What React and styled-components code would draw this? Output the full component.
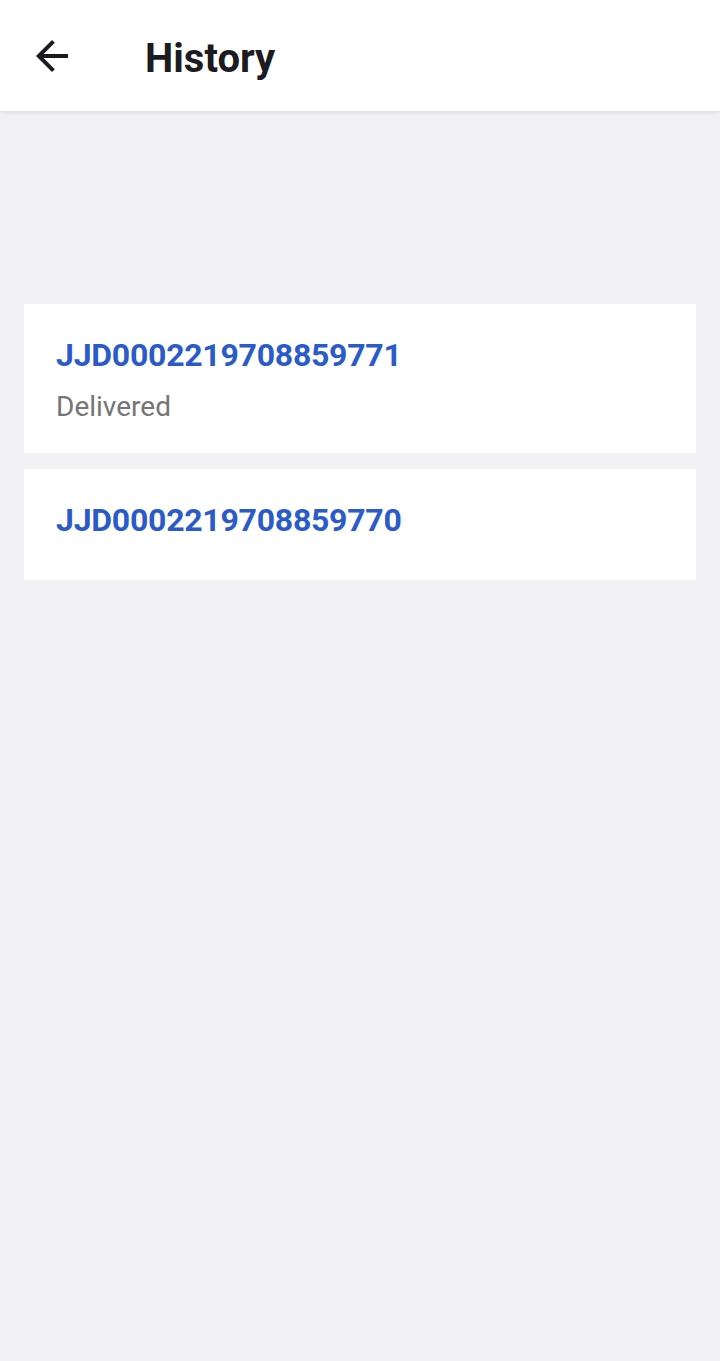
import React from "react";
import styled, { createGlobalStyle } from "styled-components";

const Global = createGlobalStyle`
  html, body { margin: 0; padding: 0; background: #f2f1f4; }
  body { font-family: Roboto, "Noto Sans", sans-serif; }
  * { box-sizing: border-box; }
`;

const Page = styled.div`
  min-height: 1361px;
  background: #f2f1f4;
  display: flex;
  flex-direction: column;
`;

const TopBar = styled.header`
  height: 111px;
  background: #ffffff;
  display: flex;
  align-items: center;
  padding-left: 28px;
  box-shadow: 0 1px 4px rgba(0, 0, 0, 0.12);
  position: relative;
  z-index: 1;
`;

const BackButton = styled.button`
  width: 48px;
  height: 48px;
  padding: 0;
  border: none;
  background: transparent;
  display: flex;
  align-items: center;
  justify-content: center;
  color: #1c1b1f;
  cursor: pointer;
`;

const Title = styled.h1`
  margin: 6px 0 0 69px;
  font-size: 40px;
  font-weight: 700;
  color: #1c1b1f;
  line-height: 48px;
`;

const List = styled.main`
  display: flex;
  flex-direction: column;
  gap: 16px;
  padding: 193px 24px 0;
`;

const Card = styled.div`
  background: #ffffff;
  min-height: 111px;
  padding: 31px 32px 28px;
  display: flex;
  flex-direction: column;
`;

const TrackingId = styled.div`
  font-size: 32px;
  font-weight: 700;
  line-height: 40px;
  letter-spacing: -0.25px;
  color: #2a5bc8;
`;

const Status = styled.div`
  margin-top: 14px;
  font-size: 28px;
  line-height: 36px;
  color: #757575;
`;

const items = [
  { id: "JJD0002219708859771", status: "Delivered" },
  { id: "JJD0002219708859770" },
];

export default function App() {
  return (
    <Page>
      <Global />
      <TopBar>
        <BackButton aria-label="Back">
          <svg width="48" height="48" viewBox="0 0 24 24" fill="currentColor">
            <path d="M20 11H7.83l5.59-5.59L12 4l-8 8 8 8 1.41-1.41L7.83 13H20v-2z" />
          </svg>
        </BackButton>
        <Title>History</Title>
      </TopBar>
      <List>
        {items.map((it) => (
          <Card key={it.id}>
            <TrackingId>{it.id}</TrackingId>
            {it.status && <Status>{it.status}</Status>}
          </Card>
        ))}
      </List>
    </Page>
  );
}
